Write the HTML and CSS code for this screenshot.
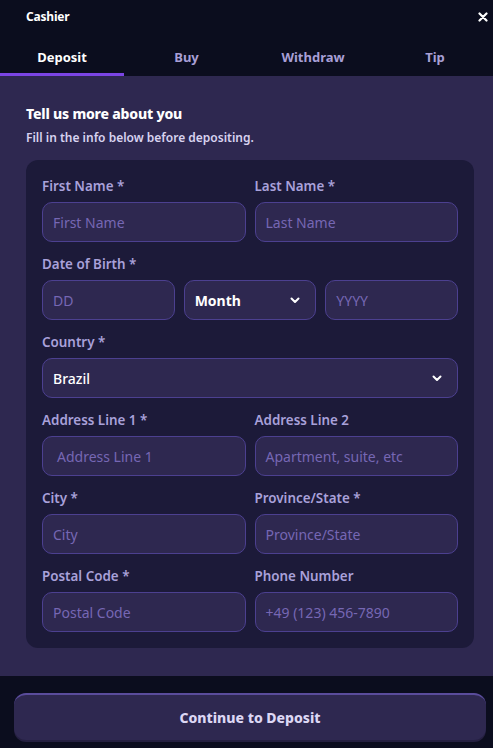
FILE: index.html
```html
<!DOCTYPE html>
<html>
<head>
<meta charset="utf-8">
<link rel="stylesheet" href="styles.css">
</head>
<body>
<div class="app">
  <header class="top">
    <div class="titlebar">
      <span class="title">Cashier</span>
      <svg class="close" width="10" height="10" viewBox="0 0 10 10"><path d="M1.5 1.5 L8.5 8.5 M8.5 1.5 L1.5 8.5" stroke="#fff" stroke-width="2.2" stroke-linecap="round"/></svg>
    </div>
    <nav class="tabs">
      <div class="tab active">Deposit</div>
      <div class="tab">Buy</div>
      <div class="tab">Withdraw</div>
      <div class="tab">Tip</div>
    </nav>
  </header>
  <main class="content">
    <h1 class="heading">Tell us more about you</h1>
    <p class="sub">Fill in the info below before depositing.</p>
    <div class="card">
      <div class="row two">
        <div class="field"><label>First Name *</label><div class="input ph">First Name</div></div>
        <div class="field"><label>Last Name *</label><div class="input ph">Last Name</div></div>
      </div>
      <div class="field">
        <label>Date of Birth *</label>
        <div class="row three">
          <div class="input ph">DD</div>
          <div class="input select bold">Month<svg class="chev" width="10" height="7" viewBox="0 0 10 7"><path d="M1.5 1.5 L5 5 L8.5 1.5" stroke="#fff" stroke-width="2" fill="none" stroke-linecap="round" stroke-linejoin="round"/></svg></div>
          <div class="input ph">YYYY</div>
        </div>
      </div>
      <div class="field">
        <label>Country *</label>
        <div class="input select val">Brazil<svg class="chev" width="10" height="7" viewBox="0 0 10 7"><path d="M1.5 1.5 L5 5 L8.5 1.5" stroke="#fff" stroke-width="2" fill="none" stroke-linecap="round" stroke-linejoin="round"/></svg></div>
      </div>
      <div class="row two">
        <div class="field"><label>Address Line 1 *</label><div class="input ph indent">Address Line 1</div></div>
        <div class="field"><label>Address Line 2</label><div class="input ph">Apartment, suite, etc</div></div>
      </div>
      <div class="row two">
        <div class="field"><label>City *</label><div class="input ph">City</div></div>
        <div class="field"><label>Province/State *</label><div class="input ph">Province/State</div></div>
      </div>
      <div class="row two">
        <div class="field"><label>Postal Code *</label><div class="input ph">Postal Code</div></div>
        <div class="field"><label>Phone Number</label><div class="input ph">+49 (123) 456-7890</div></div>
      </div>
    </div>
  </main>
  <footer class="foot">
    <button class="cta">Continue to Deposit</button>
  </footer>
</div>
</body>
</html>
```

FILE: styles.css
```css
* { box-sizing: border-box; }
html, body { margin: 0; padding: 0; }
body {
  width: 493px;
  height: 748px;
  background: #0b0d1e;
  font-family: "Noto Sans", "Open Sans", sans-serif;
  overflow: hidden;
}
.app { display: flex; flex-direction: column; height: 748px; }
.top { background: #0b0d1e; }
.titlebar {
  height: 33px;
  display: flex;
  align-items: center;
  justify-content: space-between;
  padding: 0 5px 0 26px;
}
.title { color: #fff; font-weight: 700; font-size: 12px; letter-spacing: -0.2px; }
.tabs {
  display: grid;
  grid-template-columns: 124px 125px 128px 1fr;
  height: 43px;
}
.tab {
  display: flex;
  align-items: center;
  justify-content: center;
  color: #a89fd6;
  font-weight: 700;
  font-size: 13px;
  padding-top: 8px;
  border-bottom: 3px solid transparent;
}
.tab.active { color: #fff; border-bottom-color: #7b45e4; }
.content {
  background: #2e2850;
  padding: 28px 19px 28px 26px;
  height: 601px;
}
.heading { margin: 0; color: #fff; font-size: 14px; font-weight: 800; line-height: 20px; letter-spacing: -0.2px; }
.sub { margin: 5px 0 0; color: #d8d3f0; font-size: 12px; font-weight: 600; line-height: 17px; }
.card {
  margin-top: 14px;
  background: #1c1a39;
  border-radius: 12px;
  padding: 17px 16px 16px;
  display: flex;
  flex-direction: column;
  gap: 13px;
}
.row { display: grid; gap: 9px; }
.row.two { grid-template-columns: 1fr 1fr; }
.row.three { grid-template-columns: 1fr 1fr 1fr; }
.field { display: flex; flex-direction: column; }
label {
  color: #a9a1da;
  font-size: 13.4px;
  font-weight: 600;
  line-height: 18px;
  margin-bottom: 7px;
}
.input {
  height: 40px;
  border: 1.5px solid #4c4090;
  background: #2e2850;
  border-radius: 10px;
  display: flex;
  align-items: center;
  padding: 0 10px;
  font-size: 14px;
  white-space: nowrap;
  overflow: hidden;
}
.ph { color: #7667b4; }
.indent { padding-left: 14px; }
.select { justify-content: space-between; color: #fff; }
.select.bold { font-weight: 700; }
.select.val { color: #fff; font-weight: 500; }
.chev { margin-right: 5px; }
.foot {
  flex: 1;
  background: #0b0d1e;
  padding: 17px 7px 8px 14px;
}
.cta {
  width: 472px;
  height: 47px;
  border: none;
  border-top: 2px solid #5a4c9c;
  border-radius: 12px;
  background: #2e2850;
  box-shadow: 0 2px 0 #241f40;
  color: #dcd7f4;
  font-family: "Noto Sans", sans-serif;
  font-size: 14px;
  font-weight: 800;
}
```
